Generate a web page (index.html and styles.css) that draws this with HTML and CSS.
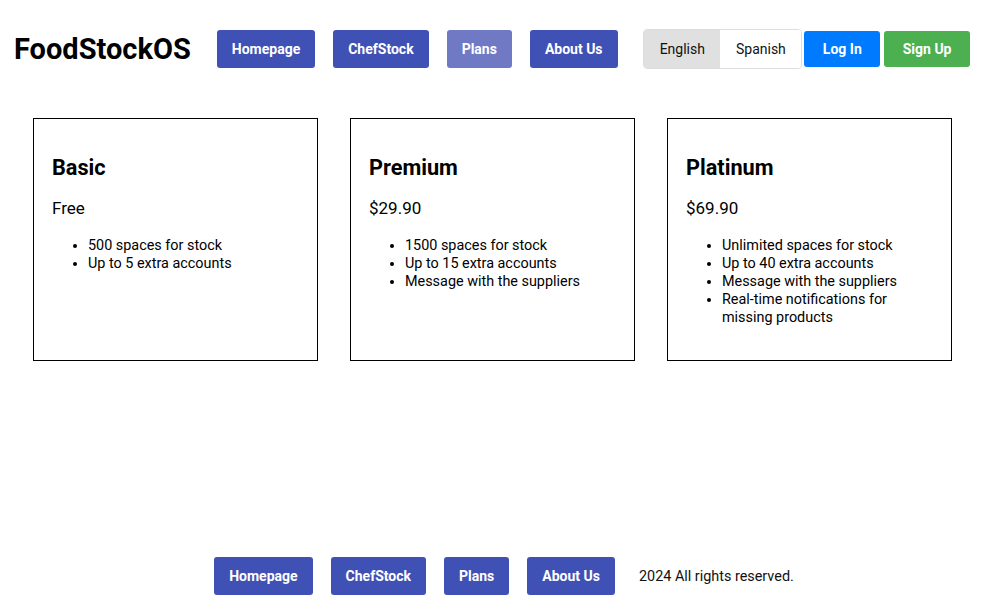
FILE: index.html
```html
<!DOCTYPE html>
<html lang="en">
<head>
<meta charset="utf-8">
<title>FoodStockOS - Plans</title>
<link rel="stylesheet" href="styles.css">
</head>
<body>
<header class="header">
  <h1 class="logo">FoodStockOS</h1>
  <nav class="nav">
    <a class="nav-btn" href="#">Homepage</a>
    <a class="nav-btn" href="#">ChefStock</a>
    <a class="nav-btn active" href="#">Plans</a>
    <a class="nav-btn" href="#">About Us</a>
  </nav>
  <div class="right">
    <div class="lang">
      <button class="lang-btn selected">English</button>
      <button class="lang-btn">Spanish</button>
    </div>
    <a class="auth login" href="#">Log In</a>
    <a class="auth signup" href="#">Sign Up</a>
  </div>
</header>
<main class="plans">
  <section class="card">
    <h2 class="card-title">Basic</h2>
    <p class="price">Free</p>
    <ul class="features">
      <li>500 spaces for stock</li>
      <li>Up to 5 extra accounts</li>
    </ul>
  </section>
  <section class="card">
    <h2 class="card-title">Premium</h2>
    <p class="price">$29.90</p>
    <ul class="features">
      <li>1500 spaces for stock</li>
      <li>Up to 15 extra accounts</li>
      <li>Message with the suppliers</li>
    </ul>
  </section>
  <section class="card">
    <h2 class="card-title">Platinum</h2>
    <p class="price">$69.90</p>
    <ul class="features">
      <li>Unlimited spaces for stock</li>
      <li>Up to 40 extra accounts</li>
      <li>Message with the suppliers</li>
      <li>Real-time notifications for missing products</li>
    </ul>
  </section>
</main>
<footer class="footer">
  <a class="nav-btn" href="#">Homepage</a>
  <a class="nav-btn" href="#">ChefStock</a>
  <a class="nav-btn" href="#">Plans</a>
  <a class="nav-btn" href="#">About Us</a>
  <p class="copy">2024 All rights reserved.</p>
</footer>
</body>
</html>
```

FILE: styles.css
```css
* { box-sizing: border-box; }
html, body { margin: 0; padding: 0; }
body {
  font-family: Roboto, "Liberation Sans", Arial, sans-serif;
  color: #000;
  background: #fff;
  min-height: 100vh;
  display: flex;
  flex-direction: column;
}
.header {
  display: flex;
  align-items: center;
  height: 98px;
  padding: 0 13px 0 14px;
}
.logo {
  margin: 0;
  font-size: 29px;
  font-weight: 700;
  line-height: 34px;
  white-space: nowrap;
}
.nav {
  display: flex;
  gap: 18px;
  margin-left: 26px;
}
.nav-btn {
  display: inline-flex;
  align-items: center;
  justify-content: center;
  flex-shrink: 0;
  white-space: nowrap;
  height: 38px;
  padding: 0 15px;
  background: #3f51b5;
  color: #fff;
  font-size: 14px;
  font-weight: 700;
  text-decoration: none;
  border-radius: 3px;
}
.nav-btn.active { background: #7079c4; }
.right {
  display: flex;
  align-items: center;
  margin-left: auto;
  flex-shrink: 0;
}
.lang {
  display: flex;
  height: 40px;
  border: 1px solid #ddd;
  border-radius: 4px;
  overflow: hidden;
}
.lang-btn {
  border: 0;
  background: #fff;
  font-family: inherit;
  font-size: 14px;
  color: #111;
  padding: 0 15.5px;
  white-space: nowrap;
}
.lang-btn.selected { background: #e0e0e0; }
.auth {
  display: inline-flex;
  align-items: center;
  justify-content: center;
  white-space: nowrap;
  height: 36px;
  padding: 0 18.5px;
  color: #fff;
  font-size: 14px;
  font-weight: 700;
  text-decoration: none;
  border-radius: 3px;
}
.login { background: #007bff; margin-left: 2px; }
.signup { background: #4caf50; margin-left: 4px; }
.plans {
  display: grid;
  grid-template-columns: repeat(3, 285px);
  gap: 32px;
  margin: 20px 0 0 33px;
}
.card {
  border: 1px solid #000;
  padding: 18px;
}
.card-title {
  margin: 18px 0 17px;
  font-size: 21.7px;
  line-height: 26px;
  font-weight: 700;
}
.price {
  margin: 0 0 19px;
  font-size: 17px;
  line-height: 20px;
}
.features {
  margin: 0 0 15px;
  padding-left: 36px;
  font-size: 14.4px;
  line-height: 18px;
}
.footer {
  margin-top: auto;
  display: flex;
  align-items: center;
  justify-content: center;
  gap: 18px;
  padding: 0 0 15px 25px;
}
.copy {
  margin: 0 0 0 6px;
  font-size: 14.4px;
  color: #111;
}
```
